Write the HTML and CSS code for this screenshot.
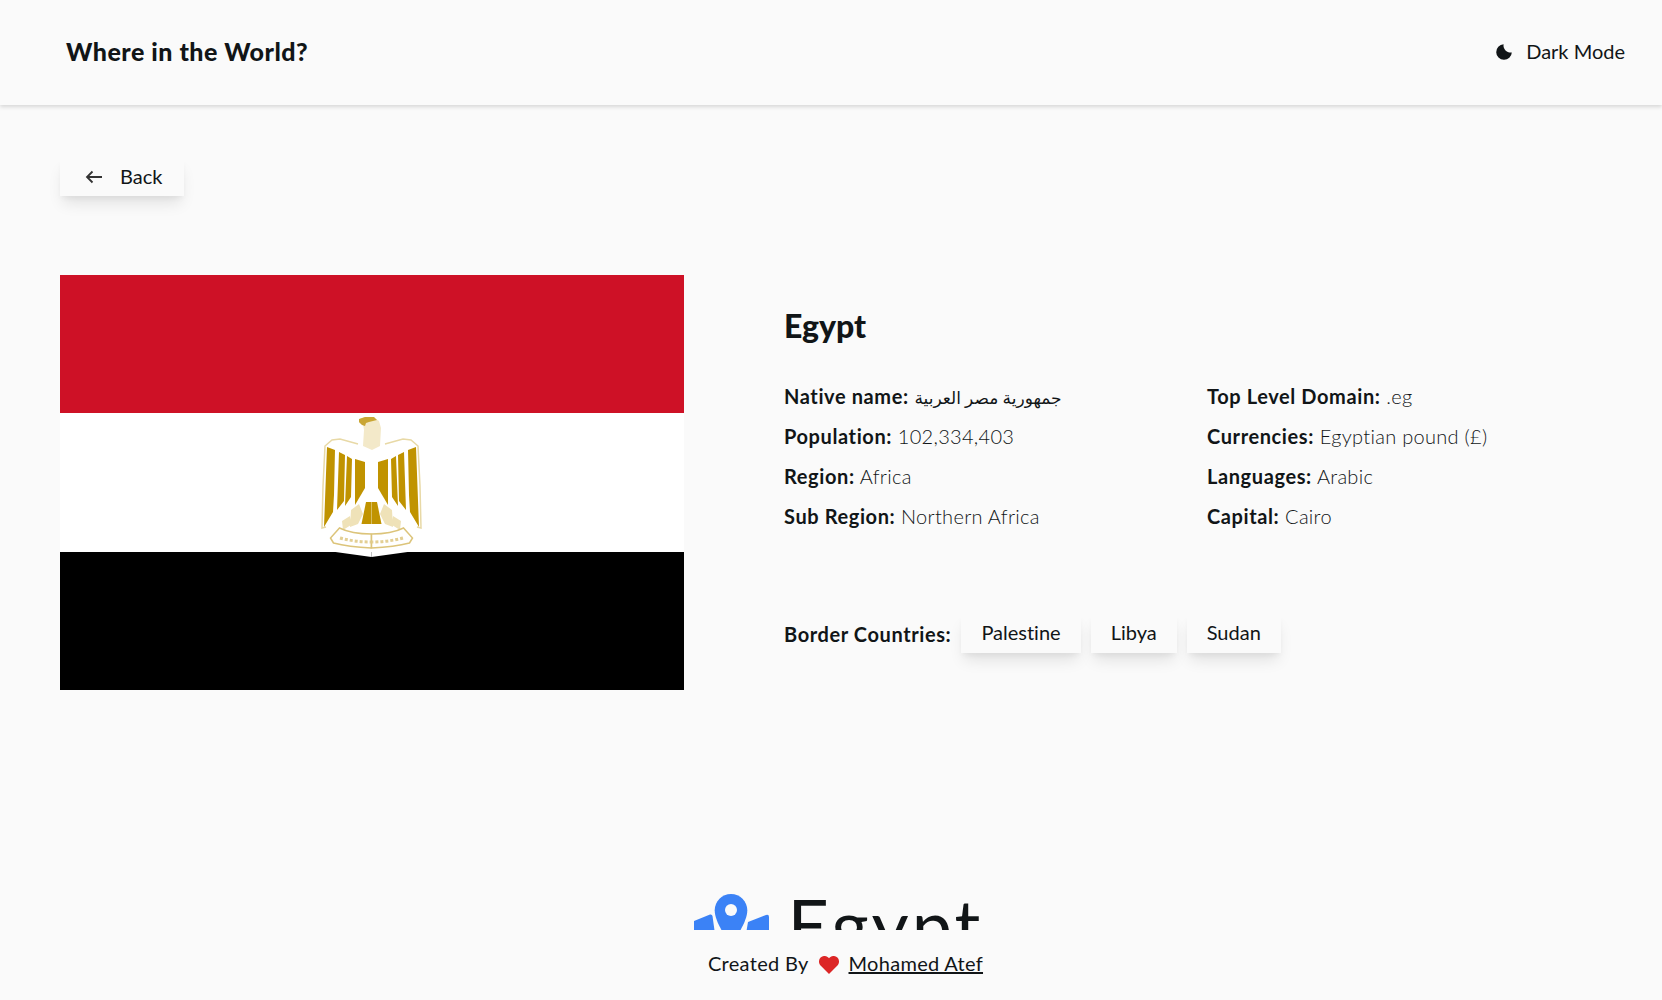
FILE: index.html
```html
<!DOCTYPE html>
<html lang="en">
<head>
  <meta charset="UTF-8" />
  <meta name="viewport" content="width=device-width, initial-scale=1.0" />
  <title>Where in the World?</title>
  <link rel="stylesheet" href="styles.css">
</head>
<body>

  <header class="top-bar">
    <h1 class="logo">Where in the World?</h1>
    <button class="theme-btn">
      <svg class="moon" viewBox="0 0 16 16"><path d="M7.600 .2A7.800 7.800 0 1 0 15.800 8.400 7 7 0 0 1 7.600 .2Z"/></svg>
      <span>Dark Mode</span>
    </button>
  </header>

  <main class="content">
    <button class="back-btn">
      <svg class="arrow" viewBox="0 0 18 14"><path d="M17 7H2M7.500 1.500 2 7l5.500 5.500"/></svg>
      <span>Back</span>
    </button>

    <section class="country">
      <svg class="flag" viewBox="0 0 624 415">
        <defs>
          <g id="eagle-half">
            <!-- wing outline -->
            <path d="M371.500 445h-9l-7-2-15-4-8 1-7 6-2 40-1 43 4-1 10-12 10-3 8 2 3 14-12 7-10 2-5 7 5 7 36 5Z" fill="#fff"/>
            <path d="M358 444l-18-5-8 1-7 6-2 40-1 42 4-1" fill="none" stroke="#e8d9a6" stroke-width="1.500"/>
            <!-- feathers -->
            <path d="M327 447l8 3-1 45-1 17-9 15ZM339 452l6 3-1 46-7 9ZM347 456l5 3-1 38-6 9Z" fill="#c09300"/>
            <!-- breast and leg -->
            <path d="M355 459l10 3v26l-10 17Z" fill="#c09300"/>
            <path d="M366 502h5.500v22h-10Z" fill="#c09300"/>
            <path d="M351 510l8-6 4 10-5 10-8 3ZM342 521l8-5 1 9-8 5Z" fill="#efe2b8"/>
            <!-- scroll -->
            <path d="M371.500 534q-20 0-32-6l-9 10 3 5q15 4 38 5Z" fill="#fff" stroke="#dcc47a" stroke-width="1.500"/>
            <path d="M340 538q15 4 31.500 4" fill="none" stroke="#e3cf94" stroke-width="3" stroke-dasharray="3 2"/>
          </g>
        </defs>
        <rect width="624" height="138" fill="#ce1126"/>
        <rect y="138" width="624" height="139" fill="#fff"/>
        <rect y="277" width="624" height="138" fill="#000"/>
        <g transform="translate(-60 -275)">
          <use href="#eagle-half"/>
          <use href="#eagle-half" transform="translate(743 0) scale(-1 1)"/>
          <!-- head -->
          <path d="M360 419l5-2h8l6 4 2 7-1 18-8 4-9-4 1-16-1-6-4-1Z" fill="#f3e9c9"/>
          <path d="M359 419l6-2h9l3 3-8 2-3 1-1 3-3-1-3-3Z" fill="#c9a634"/>
        </g>
      </svg>

      <div class="info">
        <h2 class="name">Egypt</h2>
        <div class="facts">
          <ul class="fact-list">
            <li><b>Native name:</b> <span class="arabic" lang="ar" dir="rtl">جمهورية مصر العربية</span></li>
            <li><b>Population:</b> 102,334,403</li>
            <li><b>Region:</b> Africa</li>
            <li><b>Sub Region:</b> Northern Africa</li>
          </ul>
          <ul class="fact-list">
            <li><b>Top Level Domain:</b> .eg</li>
            <li><b>Currencies:</b> Egyptian pound (£)</li>
            <li><b>Languages:</b> Arabic</li>
            <li><b>Capital:</b> Cairo</li>
          </ul>
        </div>
        <div class="borders">
          <b>Border Countries:</b>
          <a class="border-btn">Palestine</a>
          <a class="border-btn">Libya</a>
          <a class="border-btn">Sudan</a>
        </div>
      </div>
    </section>

    <div class="map-title">
      <svg class="pin" viewBox="0 0 75 60">
        <path d="M37 0C28 0 20.700 7.300 20.700 16.300 20.700 26 29 40 37 50 45 40 53.300 26 53.300 16.300 53.300 7.300 46 0 37 0Z" fill="#3b82f6"/>
        <circle cx="37" cy="16" r="6" fill="#fafafa"/>
        <path d="M0 27 16 20.500q2-.5 2.500 1.500L21 40H0ZM54 28l18-7q3-1 3 2V40H52Z" fill="#3b82f6"/>
      </svg>
      <span class="map-name">Egypt</span>
    </div>
  </main>

  <footer class="bottom-bar">
    <span>Created By</span>
    <svg class="heart" viewBox="0 0 20 18"><path d="M10 18 1.800 9.800C-.6 7.400-.6 3.700 1.600 1.600 3.800-.6 7.200-.5 9.300 1.500l.7.800.7-.8c2.100-2 5.500-2.100 7.700.1 2.200 2.100 2.200 5.800-.2 8.200Z"/></svg>
    <a class="author">Mohamed Atef</a>
  </footer>

</body>
</html>
```

FILE: styles.css
```css
* {
  box-sizing: border-box;
}

html,
body {
  height: 100%;
}

body {
  margin: 0;
  display: flex;
  flex-direction: column;
  overflow: hidden;
  font-family: "Lato", "Noto Sans", sans-serif;
  font-size: 20px;
  font-variant-ligatures: none;
  background: #fafafa;
  color: #111517;
}

.top-bar {
  height: 105px;
  flex: none;
  padding: 0 37px 3px 66px;
  display: flex;
  align-items: center;
  justify-content: space-between;
  background: #fafafa;
  box-shadow: 0 2px 4px rgba(0,0,0,0.14);
  position: relative;
  z-index: 2;
}

.logo {
  margin: 0;
  font-size: 25px;
  font-weight: 900;
  letter-spacing: 0.5px;
}

.theme-btn {
  display: flex;
  align-items: center;
  gap: 14px;
  border: none;
  padding: 0;
  background: none;
  font: inherit;
  color: inherit;
}

.moon {
  width: 16px;
  height: 16px;
  margin-top: 2px;
  fill: #111517;
}

.content {
  flex: 1;
  min-height: 0;
  overflow: hidden;
  padding: 53px 60px 0;
}

.back-btn {
  width: 124px;
  height: 38px;
  padding: 0 0 3px 25px;
  display: flex;
  align-items: center;
  gap: 17px;
  border: none;
  background: #fafafa;
  font: inherit;
  color: inherit;
  box-shadow: 0 10px 15px -3px rgba(0,0,0,0.1), 0 4px 6px -2px rgba(0,0,0,0.05);
}

.arrow {
  width: 18px;
  height: 14px;
  margin-top: 3px;
  fill: none;
  stroke: #333;
  stroke-width: 1.8;
}

.country {
  margin-top: 79px;
  display: flex;
  align-items: flex-start;
}

.flag {
  width: 624px;
  height: 415px;
  flex: none;
  display: block;
}

.info {
  margin-left: 100px;
  padding-top: 31px;
}

.name {
  margin: 0;
  font-size: 32px;
  line-height: 40px;
  font-weight: 900;
}

.facts {
  margin-top: 30px;
  display: flex;
}

.fact-list {
  width: 423px;
  margin: 0;
  padding: 0;
  list-style: none;
  font-weight: 300;
  letter-spacing: 0.3px;
}

.fact-list li {
  height: 40px;
  line-height: 40px;
}

.fact-list b,
.borders b {
  font-weight: 700;
  letter-spacing: 0.6px;
}

.arabic {
  font-family: "Liberation Serif", "DejaVu Sans", serif;
  font-size: 17px;
  font-weight: 400;
  letter-spacing: 0;
}

.borders {
  margin-top: 78px;
  display: flex;
  align-items: center;
  gap: 10px;
}

.border-btn {
  height: 39px;
  padding: 0 20px;
  line-height: 37px;
  background: #fafafa;
  box-shadow: 0 10px 15px -3px rgba(0,0,0,0.1), 0 4px 6px -2px rgba(0,0,0,0.05);
}

.map-title {
  margin-top: 204px;
  margin-left: 15px;
  display: flex;
  align-items: flex-start;
  justify-content: center;
  gap: 19px;
  font-size: 72px;
  line-height: 60px;
  letter-spacing: 3px;
}

.pin {
  width: 75px;
  height: 60px;
}

.bottom-bar {
  height: 70px;
  flex: none;
  padding: 0 0 4px 29px;
  display: flex;
  align-items: center;
  justify-content: center;
  gap: 10px;
  letter-spacing: 0.3px;
}

.heart {
  width: 20px;
  height: 18px;
  margin-top: 4px;
  fill: #dc2626;
}

.author {
  text-decoration: underline;
}
```
